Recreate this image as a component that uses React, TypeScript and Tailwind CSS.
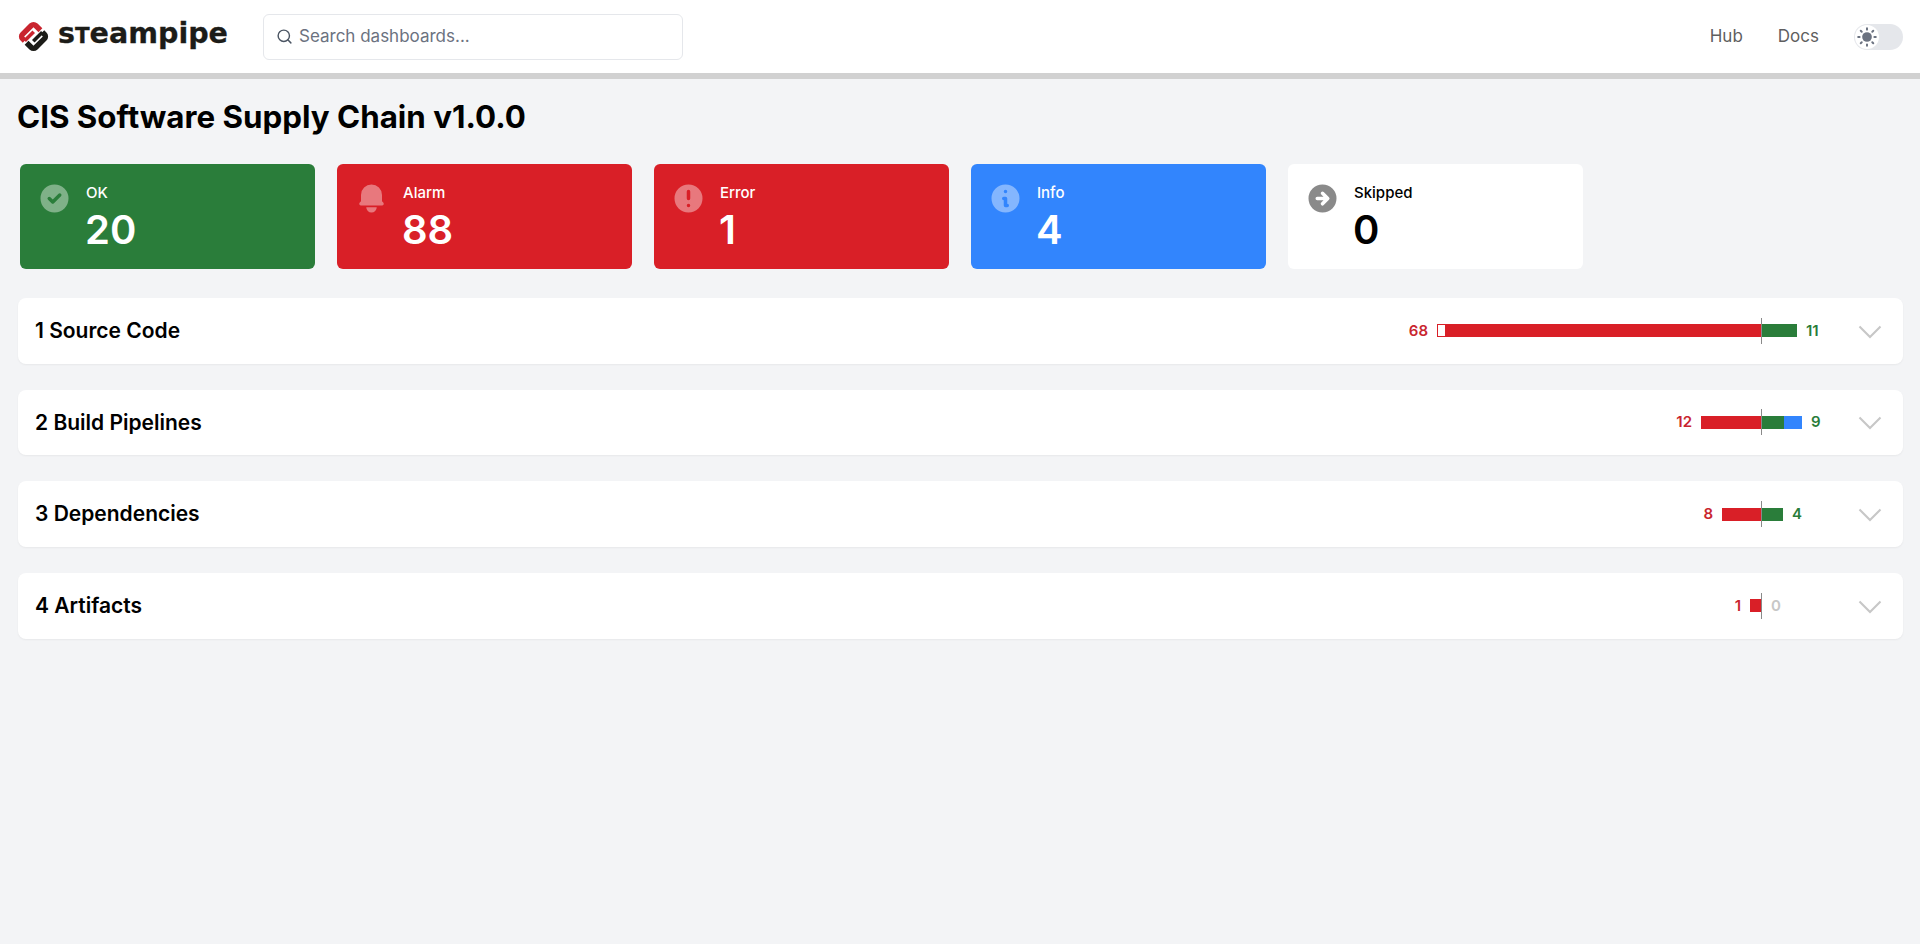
import { Search } from "lucide-react";

type Row = {
  title: string;
  left: string;
  right: string;
  leftColor: string;
  rightColor: string;
  okW?: string;
  infoW?: string;
  alarmW: string;
  outline?: boolean;
};

const rows: Row[] = [
  { title: "1 Source Code", left: "68", right: "11", leftColor: "text-[#c9252f]", rightColor: "text-[#2a7d3a]", alarmW: "w-[315px]", okW: "w-[35px]", outline: true },
  { title: "2 Build Pipelines", left: "12", right: "9", leftColor: "text-[#c9252f]", rightColor: "text-[#2a7d3a]", alarmW: "w-[60px]", okW: "w-[22px]", infoW: "w-[18px]" },
  { title: "3 Dependencies", left: "8", right: "4", leftColor: "text-[#c9252f]", rightColor: "text-[#2a7d3a]", alarmW: "w-[39px]", okW: "w-[21px]" },
  { title: "4 Artifacts", left: "1", right: "0", leftColor: "text-[#c9252f]", rightColor: "text-[#c7c7c7]", alarmW: "w-[11px]" },
];

const cards = [
  {
    label: "OK",
    value: "20",
    bg: "bg-[#2a7d3a] text-white",
    icon: "text-white/40",
    path: "M10 18a8 8 0 100-16 8 8 0 000 16zm3.707-9.293a1 1 0 00-1.414-1.414L9 10.586 7.707 9.293a1 1 0 00-1.414 1.414l2 2a1 1 0 001.414 0l4-4z",
  },
  {
    label: "Alarm",
    value: "88",
    bg: "bg-[#d91f27] text-white",
    icon: "text-white/40",
    path: "M10 2a6 6 0 00-6 6v3.586l-.707.707A1 1 0 004 14h12a1 1 0 00.707-1.707L16 11.586V8a6 6 0 00-6-6zM10 18a3 3 0 01-3-3h6a3 3 0 01-3 3z",
  },
  {
    label: "Error",
    value: "1",
    bg: "bg-[#d91f27] text-white",
    icon: "text-white/40",
    path: "M18 10a8 8 0 11-16 0 8 8 0 0116 0zm-7 4a1 1 0 11-2 0 1 1 0 012 0zm-1-9a1 1 0 00-1 1v4a1 1 0 102 0V6a1 1 0 00-1-1z",
  },
  {
    label: "Info",
    value: "4",
    bg: "bg-[#3285fd] text-white",
    icon: "text-white/40",
    path: "M18 10a8 8 0 11-16 0 8 8 0 0116 0zm-7-4a1 1 0 11-2 0 1 1 0 012 0zM9 9a1 1 0 000 2v3a1 1 0 001 1h1a1 1 0 100-2v-3a1 1 0 00-1-1H9z",
  },
  {
    label: "Skipped",
    value: "0",
    bg: "bg-white text-black",
    icon: "text-[#8a8a8a]",
    path: "M10 18a8 8 0 100-16 8 8 0 000 16zm3.707-8.707l-3-3a1 1 0 00-1.414 1.414L10.586 9H7a1 1 0 100 2h3.586l-1.293 1.293a1 1 0 101.414 1.414l3-3a1 1 0 000-1.414z",
  },
];

function Logo() {
  return (
    <svg width="212" height="40" viewBox="0 0 212 40" className="shrink-0">
      <g transform="translate(15.5 19.5) rotate(45)" fill="none">
        <g stroke="#c9252f">
          <path d="M0.5 -9.3 H-6.3 a3 3 0 0 0 -3 3 V6.3 a3 3 0 0 0 3 3 H-3.2" strokeWidth="5.4" />
          <path d="M-3.2 9.3 V-3.5" strokeWidth="3.6" />
        </g>
        <g stroke="#1c1c18">
          <path d="M-0.5 9.3 H6.3 a3 3 0 0 0 3 -3 V-6.3 a3 3 0 0 0 -3 -3 H3.2" strokeWidth="5.4" />
          <path d="M3.2 -9.3 V3.5" strokeWidth="3.6" />
        </g>
      </g>
      <text x="40" y="26" textLength="170" lengthAdjust="spacingAndGlyphs" fontFamily="'DejaVu Sans', sans-serif" fontWeight="700" fontSize="28" fill="#1c1c18" stroke="#1c1c18" strokeWidth="0.3">
        s<tspan fontSize="21">T</tspan>eampipe
      </text>
    </svg>
  );
}

function Bar({ row }: { row: Row }) {
  return (
    <div className="flex items-center">
      <div className="flex w-[400px] items-center justify-end">
        <span className={`mr-[9px] text-[15px] font-semibold ${row.leftColor}`}>{row.left}</span>
        <div className="flex h-[13px]">
          {row.outline && <div className="h-[13px] w-[9px] shrink-0 border border-[#d91f27] bg-white" />}
          <div className={`h-[13px] shrink-0 bg-[#d91f27] ${row.alarmW}`} />
        </div>
      </div>
      <div className="h-[26px] w-px shrink-0 bg-[#8a8a8a]" />
      <div className="flex w-[58px] items-center">
        {row.okW && <div className={`h-[13px] shrink-0 bg-[#2a7d3a] ${row.okW}`} />}
        {row.infoW && <div className={`h-[13px] shrink-0 bg-[#3285fd] ${row.infoW}`} />}
        <span className={`ml-[9px] shrink-0 text-[15px] font-semibold ${row.rightColor}`}>{row.right}</span>
      </div>
    </div>
  );
}

export default function App() {
  return (
    <div className="min-h-[944px] bg-[#f3f4f6] font-['Inter',sans-serif] text-black">
      <header className="flex h-[79px] items-center justify-between border-b-[6px] border-[#d1d1d1] bg-white pr-[17px] pl-[18px]">
        <div className="flex items-center">
          <Logo />
          <div className="ml-[33px] flex h-[46px] w-[420px] items-center rounded-md border border-[#e5e7eb] bg-white pl-[12px]">
            <Search className="h-[17px] w-[17px] text-[#4b5563]" strokeWidth={2} />
            <span className="ml-[6px] text-[17px] text-[#6b7280]">Search dashboards...</span>
          </div>
        </div>
        <div className="flex items-center text-[17px] text-[#5f5f5f]">
          <span>Hub</span>
          <span className="ml-[35px]">Docs</span>
          <div className="ml-[35px] flex h-[26px] w-[49px] items-center rounded-full bg-[#e5e7eb] pl-px">
            <div className="flex h-[24px] w-[24px] items-center justify-center rounded-full bg-white">
              <svg width="22" height="22" viewBox="0 0 20 20" fill="#6b7280">
                <circle cx="10" cy="10" r="4.4" />
                <g stroke="#6b7280" strokeWidth="1.8" strokeLinecap="round">
                  <path d="M10 2v1.3M10 16.7V18M2 10h1.3M16.7 10H18M4.3 4.3l.9.9M14.8 14.8l.9.9M4.3 15.7l.9-.9M14.8 5.2l.9-.9" />
                </g>
              </svg>
            </div>
          </div>
        </div>
      </header>

      <main className="pt-[18px]">
        <h1 className="pl-[17px] text-[31.3px] leading-[40px] font-bold">CIS Software Supply Chain v1.0.0</h1>

        <div className="mt-[27px] grid grid-cols-6 gap-[22px] px-[20px]">
          {cards.map((card) => (
            <div key={card.label} className={`flex h-[105px] rounded-md pt-[17px] pl-[17px] ${card.bg}`}>
              <svg width="35" height="35" viewBox="0 0 20 20" fill="currentColor" className={`shrink-0 ${card.icon}`}>
                <path fillRule="evenodd" clipRule="evenodd" d={card.path} />
              </svg>
              <div className="ml-[13px] pt-px">
                <div className="pl-px text-[15px] leading-[22px] font-medium">{card.label}</div>
                <div className="mt-[2px] text-[40px] leading-[48px] font-semibold">{card.value}</div>
              </div>
            </div>
          ))}
        </div>

        <div className="mt-[29px] flex flex-col gap-[26px] pr-[17px] pl-[18px]">
          {rows.map((row) => (
            <div key={row.title} className="flex h-[65.67px] items-center justify-between rounded-lg bg-white pr-[15px] pl-[17px] shadow-[0_1px_2px_rgba(0,0,0,0.05)]">
              <h2 className="text-[21px] font-semibold">{row.title}</h2>
              <div className="flex items-center">
                <Bar row={row} />
                <svg width="36" height="36" viewBox="0 0 24 24" fill="none" stroke="#c7c7c7" strokeWidth="1.4" className="ml-[32px] shrink-0">
                  <path d="M19 9l-7 7-7-7" />
                </svg>
              </div>
            </div>
          ))}
        </div>
      </main>
    </div>
  );
}
